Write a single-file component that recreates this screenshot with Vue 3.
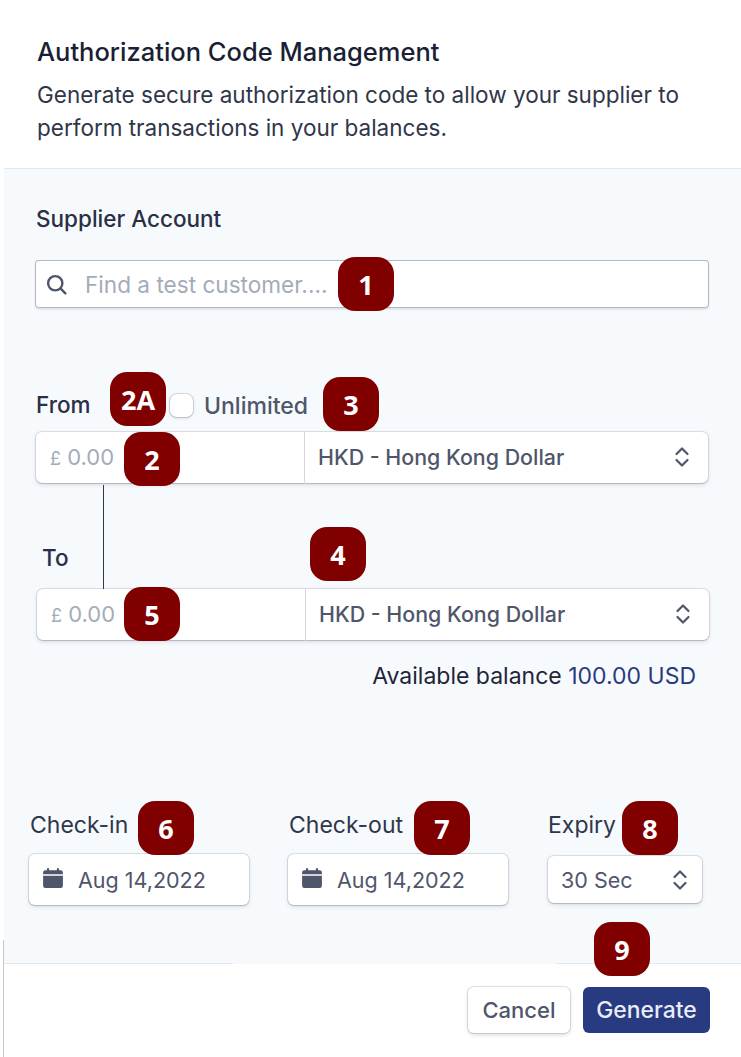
<script setup>
const badges = [
  { t: '1', x: 338, y: 257 },
  { t: '2A', x: 110, y: 372 },
  { t: '3', x: 323, y: 377 },
  { t: '2', x: 124, y: 432 },
  { t: '4', x: 310, y: 527 },
  { t: '5', x: 124, y: 587 },
  { t: '6', x: 138, y: 801 },
  { t: '7', x: 414, y: 801 },
  { t: '8', x: 622, y: 801 },
  { t: '9', x: 594, y: 922 },
]
const dates = [
  { label: 'Check-in' },
  { label: 'Check-out' },
]
</script>

<template>
  <div class="page">
    <header class="head">
      <h1>Authorization Code Management</h1>
      <p>Generate secure authorization code to allow your supplier to perform transactions in your balances.</p>
    </header>

    <main class="body">
      <div class="label supplier">Supplier Account</div>
      <div class="search field">
        <svg class="search-icon" viewBox="0 0 20 20" fill="none" stroke="#4f566b" stroke-width="2.3" stroke-linecap="round">
          <circle cx="8.8" cy="8.8" r="6.8" />
          <path d="M14 14l4.4 4.4" />
        </svg>
        <span class="placeholder">Find a test customer....</span>
      </div>

      <div class="from-head">
        <span class="label from">From</span>
        <span class="check"></span>
        <span class="unlimited">Unlimited</span>
      </div>
      <div class="field money first">
        <div class="amount"><span class="pound">£</span> 0.00</div>
        <div class="currency">
          <span>HKD - Hong Kong Dollar</span>
          <svg class="updown" viewBox="0 0 16 24" fill="none" stroke="#4f566b" stroke-width="2.2" stroke-linecap="round" stroke-linejoin="round">
            <path d="M2.5 9L8 3.5 13.500 9M2.500 15L8 20.500 13.500 15" />
          </svg>
        </div>
      </div>

      <div class="label to">To</div>
      <div class="field money second">
        <div class="amount"><span class="pound">£</span> 0.00</div>
        <div class="currency">
          <span>HKD - Hong Kong Dollar</span>
          <svg class="updown" viewBox="0 0 16 24" fill="none" stroke="#4f566b" stroke-width="2.2" stroke-linecap="round" stroke-linejoin="round">
            <path d="M2.5 9L8 3.5 13.500 9M2.500 15L8 20.500 13.500 15" />
          </svg>
        </div>
      </div>

      <div class="balance">Available balance <span>100.00 USD</span></div>

      <div class="dates">
        <div v-for="d in dates" :key="d.label" class="col">
          <div class="label small">{{ d.label }}</div>
          <div class="field date">
            <svg class="cal" viewBox="0 0 20 20" fill="#4f566b">
              <path d="M1 6.500V5a2 2 0 0 1 2-2h1.500V2a1 1 0 0 1 2 0v1h7V2a1 1 0 0 1 2 0v1H17a2 2 0 0 1 2 2v1.500z" />
              <path d="M1 8h18v9a2 2 0 0 1-2 2H3a2 2 0 0 1-2-2z" />
            </svg>
            <span>Aug 14,2022</span>
          </div>
        </div>
        <div class="col expiry">
          <div class="label small">Expiry</div>
          <div class="field select">
            <span>30 Sec</span>
            <svg class="updown" viewBox="0 0 16 24" fill="none" stroke="#4f566b" stroke-width="2.2" stroke-linecap="round" stroke-linejoin="round">
              <path d="M2.5 9L8 3.5 13.500 9M2.500 15L8 20.500 13.500 15" />
            </svg>
          </div>
        </div>
      </div>
    </main>

    <footer class="foot">
      <button class="btn cancel" type="button">Cancel</button>
      <button class="btn generate" type="button">Generate</button>
    </footer>

    <i class="connector"></i>
    <i class="edge"></i>
    <i class="patch"></i>
    <div
      v-for="b in badges"
      :key="b.t"
      class="badge"
      :style="{ left: b.x + 'px', top: b.y + 'px' }"
    >{{ b.t }}</div>
  </div>
</template>

<style scoped>
.page {
  position: relative;
  width: 741px;
  height: 1057px;
  overflow: hidden;
  display: flex;
  flex-direction: column;
  background: #fff;
  font-family: Inter, "Liberation Sans", sans-serif;
  color: #3c4257;
}
.head {
  height: 168px;
  box-sizing: border-box;
  padding: 37px 50px 0 37px;
}
.head h1 {
  margin: 0;
  font-size: 25.5px;
  line-height: 30px;
  font-weight: 500;
  color: #1a1f36;
}
.head p {
  margin: 11px 0 0;
  font-size: 22.5px;
  line-height: 33px;
  color: #30364a;
}
.body {
  height: 795px;
  box-sizing: border-box;
  margin-left: 4px;
  border-top: 1px solid #e3e8ee;
  background: #f7fafd;
}
.label {
  height: 26px;
  line-height: 26px;
  font-size: 22.5px;
  font-weight: 500;
  color: #2a2f45;
}
.supplier {
  margin: 37px 0 0 32px;
}
.field {
  box-sizing: border-box;
  background: #fff;
  border-radius: 6px;
  box-shadow: 0 0 0 1px rgba(60, 66, 87, 0.14), 0 1px 1px rgba(0, 0, 0, 0.1), 0 2px 4px rgba(60, 66, 87, 0.16);
}
.search {
  display: flex;
  align-items: center;
  width: 672px;
  height: 46px;
  margin: 29px 0 0 32px;
  padding-left: 10px;
  border-radius: 3px;
  box-shadow: 0 0 0 1px #b3b7c0, 0 2px 3px rgba(60, 66, 87, 0.2);
}
.search-icon {
  width: 21px;
  height: 21px;
}
.placeholder {
  margin-left: 18px;
  font-size: 22.6px;
  color: #a3acb9;
}
.from-head {
  display: flex;
  align-items: center;
  height: 26px;
  margin: 85px 0 0 32px;
}
.from {
  width: 134px;
}
.check {
  width: 23px;
  height: 23px;
  box-sizing: border-box;
  background: #fff;
  border-radius: 7px;
  box-shadow: 0 0 0 1px rgba(60, 66, 87, 0.16), 0 1px 3px rgba(60, 66, 87, 0.25);
}
.unlimited {
  margin: 2px 0 0 11px;
  font-size: 23px;
  font-weight: 500;
  color: #4f566b;
}
.money {
  display: grid;
  grid-template-columns: 268px 1fr;
  width: 672px;
  height: 51px;
}
.first {
  margin: 14px 0 0 32px;
}
.second {
  margin: 18px 0 0 33px;
}
.amount {
  padding-left: 14px;
  line-height: 50px;
  font-size: 22px;
  color: #a3acb9;
}
.pound {
  font-size: 18px;
}
.currency {
  display: flex;
  align-items: center;
  justify-content: space-between;
  padding: 0 18px 3px 13px;
  border-left: 1px solid #d5d8de;
  font-size: 21.4px;
  font-weight: 500;
  color: #4f566b;
}
.updown {
  width: 16px;
  height: 24px;
}
.to {
  margin: 62px 0 0 38px;
}
.balance {
  height: 26px;
  line-height: 26px;
  margin: 23px 45px 0 0;
  text-align: right;
  font-size: 23px;
  font-weight: 400;
  color: #1f2438;
}
.balance span {
  color: #2a3b7d;
}
.dates {
  display: flex;
  gap: 39px;
  margin: 123px 0 0 25px;
}
.col {
  width: 220px;
}
.small {
  padding-left: 1px;
  font-weight: 400;
  font-size: 23px;
  color: #30364a;
}
.date {
  display: flex;
  align-items: center;
  height: 51px;
  margin-top: 16px;
  padding-left: 13px;
  font-size: 21.5px;
  color: #4f566b;
}
.cal {
  width: 22px;
  height: 22px;
  margin: -4px 14px 0 0;
}
.expiry {
  width: 154px;
  margin-left: 1px;
}
.expiry .small {
  padding-left: 0;
}
.select {
  display: flex;
  align-items: center;
  justify-content: space-between;
  height: 47px;
  margin-top: 18px;
  padding: 0 14px 0 13px;
  font-size: 21.5px;
  color: #4f566b;
}
.foot {
  flex: 1;
  margin-left: 4px;
  display: flex;
  align-items: center;
  justify-content: flex-end;
  gap: 13px;
  padding: 0 31px 2px 0;
  border-top: 1px solid #e3e8ee;
}
.btn {
  border: 0;
  padding: 0;
  font-family: inherit;
  font-size: 22px;
  font-weight: 500;
  border-radius: 6px;
}
.cancel {
  width: 102px;
  height: 46px;
  background: #fff;
  color: #4f566b;
  box-shadow: 0 0 0 1px rgba(60, 66, 87, 0.14), 0 2px 4px rgba(60, 66, 87, 0.2);
}
.generate {
  width: 127px;
  height: 46px;
  background: #283a80;
  color: #e9ecf5;
  font-size: 22.9px;
}
.connector {
  position: absolute;
  left: 103px;
  top: 485px;
  width: 1.2px;
  height: 104px;
  background: #33384a;
}
.edge {
  position: absolute;
  left: 3px;
  top: 940px;
  width: 1px;
  height: 117px;
  background: #c9c9c9;
}
.patch {
  position: absolute;
  left: 233px;
  top: 960px;
  width: 323px;
  height: 4px;
  background: #f7fafd;
}
.badge {
  position: absolute;
  width: 56px;
  height: 54px;
  display: flex;
  align-items: center;
  justify-content: center;
  border-radius: 17px;
  background: #800000;
  color: #fff;
  font-family: "Open Sans", sans-serif;
  font-size: 27px;
  font-weight: 700;
}
</style>
